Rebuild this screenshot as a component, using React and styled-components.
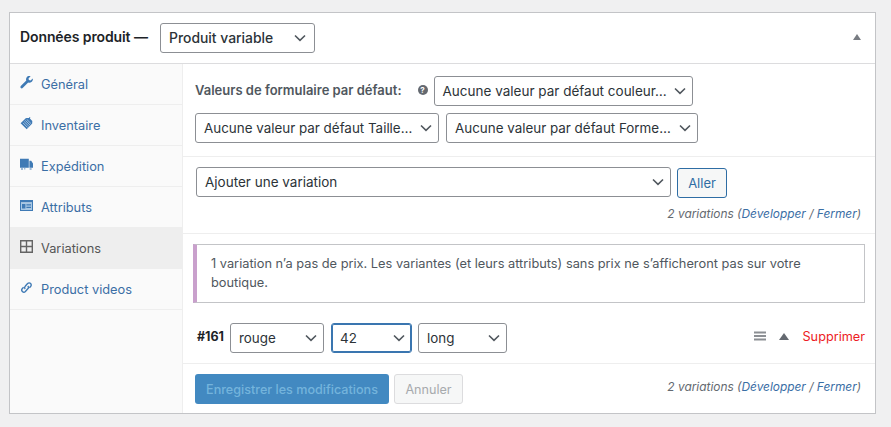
import React from "react";
import styled, { createGlobalStyle } from "styled-components";

const Global = createGlobalStyle`
  html, body { margin: 0; padding: 0; background: #f0f0f1; }
  body { font-family: Inter, "Noto Sans", "Liberation Sans", sans-serif; font-size: 13px; color: #50575e; }
`;

const Page = styled.div`
  width: 891px;
  height: 427px;
  padding: 12px 15px 0 9px;
  box-sizing: border-box;
  overflow: hidden;
`;
const Panel = styled.section`
  width: 867px;
  height: 402px;
  box-sizing: border-box;
  background: #fff;
  border: 1px solid #c3c4c7;
  display: flex;
  flex-direction: column;
`;
const Header = styled.header`
  height: 51px;
  flex: none;
  box-sizing: border-box;
  border-bottom: 1px solid #dcdcde;
  display: flex;
  align-items: center;
  padding: 0 12px 0 10px;
`;
const Title = styled.h2`
  margin: 0 12px 3px 0;
  font-size: 14px;
  font-weight: 600;
  color: #1d2327;
  white-space: nowrap;
  letter-spacing: -0.1px;
  width: 128px;
`;
const Toggle = styled.span`
  margin-left: auto;
  margin-bottom: 3px;
  margin-right: 2px;
  width: 0;
  height: 0;
  border-left: 4.5px solid transparent;
  border-right: 4.5px solid transparent;
  border-bottom: 6px solid #787c82;
`;
const Body = styled.div`
  flex: 1;
  display: flex;
  min-height: 0;
`;
const Sidebar = styled.nav`
  width: 173px;
  flex: none;
  box-sizing: border-box;
  background: #fafafa;
  border-right: 1px solid #eee;
`;
const Tab = styled.a`
  height: 41px;
  box-sizing: border-box;
  border-bottom: 1px solid #eee;
  display: flex;
  align-items: center;
  gap: 8px;
  padding: 1px 0 0 10px;
  color: ${(p) => (p.$active ? "#555" : "#3a6ea5")};
  background: ${(p) => (p.$active ? "#eee" : "transparent")};
  font-size: 12.8px;
  svg { flex: none; margin-top: -4px; }
`;
const Main = styled.div`
  flex: 1;
  min-width: 0;
  display: flex;
  flex-direction: column;
`;
const Section = styled.div`
  box-sizing: border-box;
  border-bottom: 1px solid #eee;
  height: ${(p) => p.$h}px;
  padding: ${(p) => p.$pad};
`;
const Wrap = styled.div`
  display: flex;
  align-items: center;
  gap: ${(p) => p.$gap || 7}px;
  margin-bottom: ${(p) => p.$mb || 0}px;
`;
const Label = styled.strong`
  font-size: 13px;
  font-weight: 600;
  color: #50575e;
  white-space: nowrap;
  margin-top: -3px;
`;
const Help = styled.span`
  width: 10px;
  height: 10px;
  border-radius: 50%;
  background: #646970;
  color: #fff;
  font-size: 8px;
  font-weight: 700;
  line-height: 10px;
  text-align: center;
  margin: -3px 0 0 10px;
  flex: none;
`;
const SelectBox = styled.div`
  width: ${(p) => p.$w}px;
  height: 30px;
  flex: none;
  box-sizing: border-box;
  border: 1px solid #8c8f94;
  border-radius: 3px;
  background: #fff;
  display: flex;
  align-items: center;
  justify-content: space-between;
  padding: 0 ${(p) => (p.$pr ?? 6)}px 0 8px;
  font-size: ${(p) => p.$fs || 13.4}px;
  font-weight: ${(p) => p.$fw || 400};
  color: #2c3338;
  white-space: nowrap;
  ${(p) => p.$focus && "border-color: #3a76b0; box-shadow: inset 0 0 0 1px #3a76b0;"}
`;
const Chevron = () => (
  <svg width="12" height="8" viewBox="0 0 12 8" fill="none" stroke="#50575e" strokeWidth="1.6">
    <path d="M1 1.5 L6 6.3 L11 1.5" />
  </svg>
);
const Select = ({ w, children, ...rest }) => (
  <SelectBox $w={w} {...rest}>
    <span>{children}</span>
    <Chevron />
  </SelectBox>
);
const GoButton = styled.button`
  width: 50px;
  height: 30px;
  box-sizing: border-box;
  margin-top: 2px;
  border: 1px solid #2e6da4;
  border-radius: 3px;
  background: #f6f7f7;
  color: #2e6da4;
  font: inherit;
  font-size: 13px;
  padding: 0;
`;
const Count = styled.div`
  text-align: right;
  font-style: italic;
  font-size: 11.9px;
  color: #646970;
  margin: ${(p) => p.$m};
  a { color: #3a6ea5; }
`;
const Notice = styled.div`
  width: 672px;
  height: 59px;
  box-sizing: border-box;
  margin: 10px 0 0 10px;
  background: #fff;
  border: 1px solid #c3c4c7;
  border-left: 4px solid #c9a0cc;
  padding: 9px 50px 9px 14px;
  font-size: 12.8px;
  line-height: 19px;
  color: #50575e;
`;
const VariationRow = styled.div`
  height: 61px;
  flex: none;
  box-sizing: border-box;
  padding: 20px 10px 0 14px;
  border-bottom: 1px solid #eee;
  display: flex;
  align-items: flex-start;
`;
const Id = styled.strong`
  font-size: 12.5px;
  font-weight: 700;
  color: #1d2327;
  margin: 6px 2px 0 0;
  width: 31px;
  flex: none;
`;
const SelectGroup = styled.div`
  display: flex;
  gap: 7px;
  & > :last-child { margin-left: -1px; }
`;
const Actions = styled.div`
  margin-left: auto;
  display: flex;
  align-items: center;
  gap: 13px;
  height: 26px;
`;
const Up = styled.span`
  width: 0;
  height: 0;
  border-left: 5px solid transparent;
  border-right: 5px solid transparent;
  border-bottom: 7px solid #646970;
`;
const Remove = styled.a`
  color: #ed1c24;
  font-size: 12.7px;
`;
const Footer = styled.div`
  flex: 1;
  display: flex;
  align-items: flex-start;
  padding: 10px 14px 0 12px;
  gap: 5px;
`;
const Save = styled.button`
  width: 194px;
  height: 30px;
  border: none;
  border-radius: 3px;
  background: #4289c1;
  color: #74b4dc;
  font: inherit;
  font-size: 12.6px;
  font-weight: 500;
  padding: 0;
`;
const Cancel = styled.button`
  width: 69px;
  height: 30px;
  box-sizing: border-box;
  border: 1px solid #dcdcde;
  border-radius: 3px;
  background: #f6f7f7;
  color: #a7aaad;
  font: inherit;
  font-size: 12.6px;
  padding: 0;
`;
const Ico = ({ children }) => (
  <svg width="13" height="13" viewBox="0 0 13 13" fill="#3f7ab5">{children}</svg>
);
const icons = {
  wrench: (
    <Ico>
      <path d="M12.8 2.4 10.5 4.4 8.9 4 8.5 2.4 10.6.3C9-.2 7.4.3 6.6 1.4 5.9 2.4 5.9 3.6 6.3 4.5L1 9.8C.2 10.6.2 11.4.8 12c.6.6 1.4.5 2.1-.2L8.2 6.5c1 .4 2.2.3 3.2-.4 1.2-.9 1.7-2.3 1.4-3.7Z" />
    </Ico>
  ),
  tag: (
    <Ico>
      <path d="M0.6 6.2 6 .9 9 .9 9.6 0 10.4.6 9.9 1.5 12.3 4 12.2 6.6 6.7 12.2Z" />
      <path d="M4.2 4.6 8.8 9.2M3 5.9l4.6 4.6M5.4 3.4 10 8M6.7 2.3 11 6.6" stroke="#dbe7f3" strokeWidth=".6" fill="none" />
    </Ico>
  ),
  truck: (
    <Ico>
      <path d="M0 .8h8.8v9H0ZM9.4 2.8h1.8L13 5.6v4.2H9.4Z" />
      <path d="M1 10.6h2v1H1ZM9.6 10.6h2v1h-2ZM4 10.6h1.4v.7H4Z" />
    </Ico>
  ),
  card: (
    <Ico>
      <path fillRule="evenodd" d="M0 1h13v11H0ZM1 3.6v7.4h11V3.6Z" />
      <path fill="#a9c8e4" d="M1 3.6h11v7.4H1Z" />
      <path d="M2 5h3.4v4.4H2ZM6.4 5.2H11v1.2H6.4ZM6.4 7.8H11V9H6.4Z" />
    </Ico>
  ),
  grid: (
    <svg width="13" height="13" viewBox="0 0 13 13" fill="none" stroke="#646464" strokeWidth="1.4">
      <path d="M.7.7h11.6v11.6H.7ZM6.5.7v11.6M.7 6.5h11.6" />
    </svg>
  ),
  link: (
    <svg width="13" height="13" viewBox="0 0 13 13" fill="none" stroke="#3f7ab5" strokeWidth="1.4">
      <path d="M5.2 8a2 2 0 0 1 0-2.8l2.4-2.6a2.1 2.1 0 0 1 3 3L9.4 6.8" />
      <path d="M7.8 5a2 2 0 0 1 0 2.8l-2.4 2.6a2.1 2.1 0 0 1-3-3l1.2-1.2" />
    </svg>
  ),
};
const tabs = [
  ["wrench", "Général"],
  ["tag", "Inventaire"],
  ["truck", "Expédition"],
  ["card", "Attributs"],
  ["grid", "Variations", true],
  ["link", "Product videos"],
];
const Handle = () => (
  <svg width="12" height="10" viewBox="0 0 12 10" fill="#8c8f94">
    <path d="M0 0.5h12v2H0ZM0 4h12v2H0ZM0 7.5h12v2H0Z" />
  </svg>
);
const CountText = ({ m }) => (
  <Count $m={m}>
    2 variations (<a>Développer</a> / <a>Fermer</a>)
  </Count>
);

export default function App() {
  return (
    <Page>
      <Global />
      <Panel>
        <Header>
          <Title>Données produit —</Title>
          <Select w={155} $fs={13.9} $fw={500} $pr={8}>Produit variable</Select>
          <Toggle />
        </Header>
        <Body>
          <Sidebar>
            {tabs.map(([ic, label, active]) => (
              <Tab key={label} $active={active}>
                {icons[ic]}
                <span>{label}</span>
              </Tab>
            ))}
          </Sidebar>
          <Main>
            <Section $h={93} $pad="12px 12px 0 12px">
              <Wrap $gap={6} $mb={7}>
                <Label>Valeurs de formulaire par défaut:</Label>
                <Help>?</Help>
                <Select w={259} $fs={13.5}>Aucune valeur par défaut couleur…</Select>
              </Wrap>
              <Wrap>
                <Select w={244}>Aucune valeur par défaut Taille…</Select>
                <Select w={252}>Aucune valeur par défaut Forme…</Select>
              </Wrap>
            </Section>
            <Section $h={77} $pad="9px 14px 0 13px">
              <Wrap $gap={6}>
                <Select w={475} $fs={13.5}>Ajouter une variation</Select>
                <GoButton>Aller</GoButton>
              </Wrap>
              <CountText m="8px 0 0 0" />
            </Section>
            <Notice>
              1 variation n’a pas de prix. Les variantes (et leurs attributs) sans prix ne s’afficheront pas sur votre boutique.
            </Notice>
            <VariationRow>
              <Id>#161</Id>
              <SelectGroup>
                <Select w={94}>rouge</Select>
                <Select w={81} $focus>42</Select>
                <Select w={89}>long</Select>
              </SelectGroup>
              <Actions>
                <Handle />
                <Up />
                <Remove>Supprimer</Remove>
              </Actions>
            </VariationRow>
            <Footer>
              <Save>Enregistrer les modifications</Save>
              <Cancel>Annuler</Cancel>
              <CountText m="5px 0 0 auto" />
            </Footer>
          </Main>
        </Body>
      </Panel>
    </Page>
  );
}
